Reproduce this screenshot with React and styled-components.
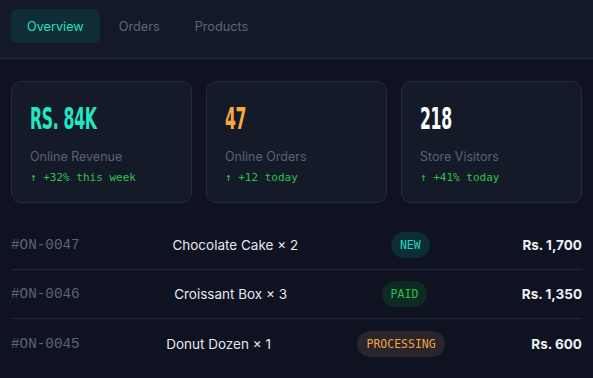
import React from "react";
import styled, { createGlobalStyle } from "styled-components";

const GlobalStyle = createGlobalStyle`
  * { box-sizing: border-box; }
  body {
    margin: 0;
    background: #0f1220;
    font-family: Inter, "Noto Sans", sans-serif;
  }
`;

const tabs = ["Overview", "Orders", "Products"];

const stats = [
  { value: "RS. 84K", label: "Online Revenue", delta: "↑ +32% this week", tone: "teal" },
  { value: "47", label: "Online Orders", delta: "↑ +12 today", tone: "orange" },
  { value: "218", label: "Store Visitors", delta: "↑ +41% today", tone: "white" },
];

const orders = [
  { id: "#ON-0047", name: "Chocolate Cake × 2", status: "NEW", amount: "Rs. 1,700" },
  { id: "#ON-0046", name: "Croissant Box × 3", status: "PAID", amount: "Rs. 1,350" },
  { id: "#ON-0045", name: "Donut Dozen × 1", status: "PROCESSING", amount: "Rs. 600" },
];

const valueColors = {
  teal: "#1fe8c2",
  orange: "#f7a93c",
  white: "#ffffff",
};

const badgeColors = {
  NEW: { bg: "#0c2d33", fg: "#1ed6c2" },
  PAID: { bg: "#0e2a22", fg: "#25c24c" },
  PROCESSING: { bg: "#29252a", fg: "#f2a33d" },
};

const App = () => {
  return (
    <>
      <GlobalStyle />
      <Page>
        <TabBar>
          {tabs.map((t, i) => (
            <Tab key={t} $active={i === 0}>
              {t}
            </Tab>
          ))}
        </TabBar>

        <Main>
          <Stats>
            {stats.map((s) => (
              <StatCard key={s.label}>
                <Value $color={valueColors[s.tone]}>{s.value}</Value>
                <Label>{s.label}</Label>
                <Delta>{s.delta}</Delta>
              </StatCard>
            ))}
          </Stats>

          <OrderList>
            {orders.map((o) => (
              <OrderRow key={o.id}>
                <OrderId>{o.id}</OrderId>
                <Product>{o.name}</Product>
                <Badge $bg={badgeColors[o.status].bg} $fg={badgeColors[o.status].fg}>
                  {o.status}
                </Badge>
                <Amount>{o.amount}</Amount>
              </OrderRow>
            ))}
          </OrderList>
        </Main>
      </Page>
    </>
  );
};

export default App;

const Page = styled.div`
  width: 593px;
  height: 378px;
  overflow: hidden;
  background: #0f1220;
`;

const TabBar = styled.div`
  display: flex;
  gap: 3px;
  height: 59px;
  padding: 9px 11px 0;
  background: #141927;
  border-bottom: 1px solid #242a38;
`;

const Tab = styled.div`
  height: 34px;
  padding: 0 16px;
  display: flex;
  align-items: center;
  border-radius: 7px;
  font-size: 12.7px;
  color: ${(p) => (p.$active ? "#22e3bf" : "#5d6679")};
  background: ${(p) => (p.$active ? "#0f2d36" : "transparent")};
`;

const Main = styled.div`
  padding: 22px 11px 0;
`;

const Stats = styled.div`
  display: grid;
  grid-template-columns: repeat(3, 181px);
  gap: 14px;
`;

const StatCard = styled.div`
  height: 122px;
  padding: 20px 18px 0;
  background: #151a29;
  border: 1px solid #262b3a;
  border-radius: 10px;
`;

const Value = styled.div`
  display: inline-block;
  font-family: "DejaVu Sans", sans-serif;
  font-stretch: condensed;
  font-weight: 700;
  font-size: 30px;
  line-height: 34px;
  letter-spacing: -0.5px;
  color: ${(p) => p.$color};
  transform: scaleX(0.58);
  transform-origin: left center;
`;

const Label = styled.div`
  margin-top: 13px;
  font-size: 12.5px;
  color: #596174;
`;

const Delta = styled.div`
  margin-top: 7px;
  font-family: "DejaVu Sans Mono", "Liberation Mono", monospace;
  font-size: 11px;
  font-weight: 500;
  color: #2bc34f;
`;

const OrderList = styled.div`
  margin-top: 18px;
`;

const OrderRow = styled.div`
  display: flex;
  align-items: center;
  justify-content: space-between;
  height: 49px;
  border-bottom: 1px solid #222735;

  &:last-child {
    border-bottom: none;
  }
`;

const OrderId = styled.div`
  font-family: "Liberation Mono", "DejaVu Sans Mono", monospace;
  font-size: 14.3px;
  color: #5a6478;
`;

const Product = styled.div`
  font-size: 13.5px;
  color: #e4e7ee;
`;

const Badge = styled.div`
  height: 26px;
  padding: 0 9px;
  display: flex;
  align-items: center;
  border-radius: 13px;
  font-family: "DejaVu Sans Mono", "Liberation Mono", monospace;
  font-size: 11.5px;
  color: ${(p) => p.$fg};
  background: ${(p) => p.$bg};
`;

const Amount = styled.div`
  font-size: 13.5px;
  font-weight: 700;
  color: #eef0f5;
`;
